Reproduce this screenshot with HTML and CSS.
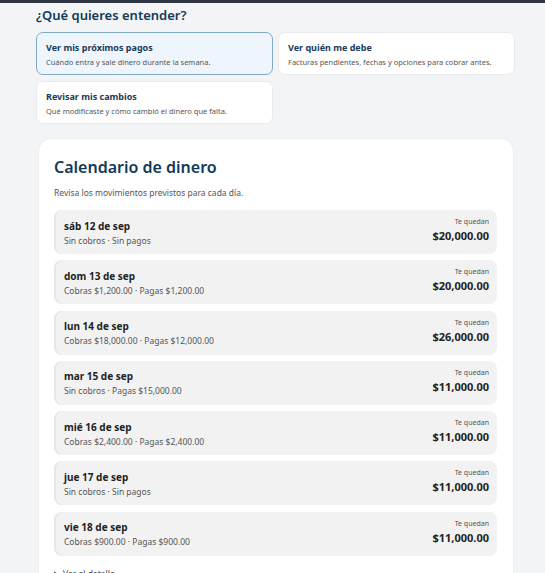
FILE: index.html
```html
<!DOCTYPE html>
<html lang="es">
<head>
  <meta charset="UTF-8" />
  <meta name="viewport" content="width=device-width,initial-scale=1.0" />
  <title>Calendario de dinero</title>
  <link rel="stylesheet" href="styles.css">
</head>
<body>
  <div class="topbar"></div>
  <main class="page">
    <h2 class="ask">¿Qué quieres entender?</h2>
    <div class="options">
      <a class="option active" href="#">
        <span class="opt-title">Ver mis próximos pagos</span>
        <span class="opt-sub">Cuándo entra y sale dinero durante la semana.</span>
      </a>
      <a class="option" href="#">
        <span class="opt-title">Ver quién me debe</span>
        <span class="opt-sub">Facturas pendientes, fechas y opciones para cobrar antes.</span>
      </a>
      <a class="option" href="#">
        <span class="opt-title">Revisar mis cambios</span>
        <span class="opt-sub">Qué modificaste y cómo cambió el dinero que falta.</span>
      </a>
    </div>

    <section class="calendar">
      <h1>Calendario de dinero</h1>
      <p class="lead">Revisa los movimientos previstos para cada día.</p>
      <ul class="days">
        <li class="day">
          <div><div class="date">sáb 12 de sep</div><div class="moves">Sin cobros · Sin pagos</div></div>
          <div class="left"><div class="label">Te quedan</div><div class="amount">$20,000.00</div></div>
        </li>
        <li class="day">
          <div><div class="date">dom 13 de sep</div><div class="moves">Cobras $1,200.00 · Pagas $1,200.00</div></div>
          <div class="left"><div class="label">Te quedan</div><div class="amount">$20,000.00</div></div>
        </li>
        <li class="day">
          <div><div class="date">lun 14 de sep</div><div class="moves">Cobras $18,000.00 · Pagas $12,000.00</div></div>
          <div class="left"><div class="label">Te quedan</div><div class="amount">$26,000.00</div></div>
        </li>
        <li class="day">
          <div><div class="date">mar 15 de sep</div><div class="moves">Sin cobros · Pagas $15,000.00</div></div>
          <div class="left"><div class="label">Te quedan</div><div class="amount">$11,000.00</div></div>
        </li>
        <li class="day">
          <div><div class="date">mié 16 de sep</div><div class="moves">Cobras $2,400.00 · Pagas $2,400.00</div></div>
          <div class="left"><div class="label">Te quedan</div><div class="amount">$11,000.00</div></div>
        </li>
        <li class="day">
          <div><div class="date">jue 17 de sep</div><div class="moves">Sin cobros · Sin pagos</div></div>
          <div class="left"><div class="label">Te quedan</div><div class="amount">$11,000.00</div></div>
        </li>
        <li class="day">
          <div><div class="date">vie 18 de sep</div><div class="moves">Cobras $900.00 · Pagas $900.00</div></div>
          <div class="left"><div class="label">Te quedan</div><div class="amount">$11,000.00</div></div>
        </li>
      </ul>
      <details class="more">
        <summary>Ver el detalle</summary>
      </details>
    </section>
  </main>
</body>
</html>
```

FILE: styles.css
```css
* { margin: 0; padding: 0; box-sizing: border-box; }
body {
  background: #f3f4f6;
  font-family: "Noto Sans", "Open Sans", sans-serif;
  color: #222;
}
.topbar { height: 3px; background: #2f3742; }
.page { width: 479px; margin-left: 36px; padding-top: 3px; }
.ask {
  font-size: 13px;
  font-weight: 600;
  color: #123a57;
  margin-bottom: 8px;
}
.options {
  display: grid;
  grid-template-columns: 1fr 1fr;
  gap: 6px 5px;
}
.option {
  display: flex;
  flex-direction: column;
  justify-content: center;
  height: 43px;
  padding: 0 9px;
  background: #fff;
  border: 1px solid #e9ebee;
  border-radius: 7px;
  text-decoration: none;
}
.option.active { background: #eef5fc; border-color: #7ea9c9; }
.opt-title { font-size: 9px; font-weight: 700; color: #1b3a55; margin-bottom: 3px; }
.opt-sub { font-size: 7.5px; color: #555; }
.calendar {
  margin: 14px 1px 0 2px;
  background: #fff;
  border: 1px solid #eceef1;
  border-radius: 13px;
  padding: 17px 16px 0 15px;
  height: 460px;
}
.calendar h1 {
  font-size: 16px;
  font-weight: 600;
  color: #123a57;
  margin-bottom: 9px;
}
.lead { font-size: 8.5px; color: #555; margin-bottom: 12px; }
.days { list-style: none; display: flex; flex-direction: column; gap: 6.3px; }
.day {
  height: 44px;
  display: flex;
  justify-content: space-between;
  align-items: center;
  padding: 0 8px 0 10px;
  background: #f2f2f2;
  border-radius: 8px;
  box-shadow: inset 2px 0 0 #e6e6e6;
}
.date { font-size: 10px; font-weight: 700; color: #222; margin-bottom: 2px; }
.moves { font-size: 8.5px; color: #555; }
.left { text-align: right; margin-top: -4px; }
.label { font-size: 7px; color: #555; margin-bottom: 2px; }
.amount { font-size: 11px; font-weight: 700; color: #222; }
.more { margin-top: 12px; font-size: 8.5px; color: #444; }
```
